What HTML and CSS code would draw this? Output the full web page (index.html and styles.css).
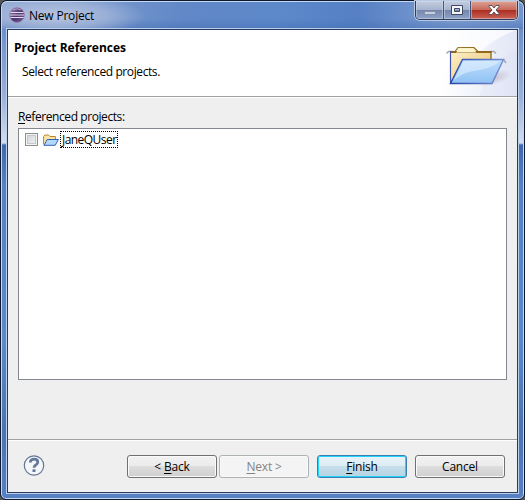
FILE: index.html
```html
<!DOCTYPE html>
<html lang="en">
<head>
<meta charset="utf-8">
<title>New Project</title>
<link rel="stylesheet" href="styles.css">
</head>
<body>
<main class="window">
  <header class="titlebar">
    <svg class="app-icon" width="16" height="16" viewBox="0 0 16 16">
      <defs><linearGradient id="orb" x2="1" y2="1"><stop stop-color="#9b86b5"/><stop offset=".5" stop-color="#4c3570"/><stop offset="1" stop-color="#765794"/></linearGradient></defs>
      <circle cx="8" cy="8" r="7.4" fill="url(#orb)" stroke="#a083ae" stroke-width=".7"/>
      <path d="M1.5 5.5h13M1 8h14M1.5 10.5h13" stroke="#e5dcec" stroke-width="1.1"/>
      <path d="M4 3Q8 .5 12 3" stroke="#b7a2c5" fill="none"/>
    </svg>
    <span class="title">New Project</span>
    <div class="controls">
      <div class="control minimize"><svg width="12" height="16" viewBox="0 0 12 16"><rect x=".5" y="9.5" width="11" height="3" fill="#c6cfdf" stroke="#8591a9"/></svg></div>
      <div class="control maximize"><svg width="12" height="12" viewBox="0 0 12 12"><path fill="#f4f4f4" stroke="#3d4966" fill-rule="evenodd" d="M.5 1.5h11v9H.5zM3.5 4.5h5v3h-5z"/></svg></div>
      <div class="control close"><svg width="12" height="12" viewBox="0 0 12 12"><path d="M1 1.5h3L6 4l2-2.5h3v1L8 6l3 3.5v1H8L6 8l-2 2.5H1v-1L4 6 1 2.5z" fill="#fff" stroke="#514652" stroke-width=".9"/></svg></div>
    </div>
  </header>
  <section class="client">
    <div class="banner">
      <div class="banner-text">
        <h1>Project References</h1>
        <p>Select referenced projects.</p>
      </div>
      <svg class="banner-art" width="75" height="66" viewBox="442 30 75 66">
        <defs>
          <linearGradient id="bg"><stop stop-color="#fff"/><stop offset="1" stop-color="#e2e6f6"/></linearGradient>
          <linearGradient id="cream" x2="1" y2="1"><stop stop-color="#fff3cf"/><stop offset="1" stop-color="#e8c16c"/></linearGradient>
          <linearGradient id="back" x2="1"><stop stop-color="#4354ad"/><stop offset=".2" stop-color="#a17a28"/><stop offset="1" stop-color="#83611a"/></linearGradient>
          <linearGradient id="blue" x2="0" y2="1"><stop stop-color="#c0dffd"/><stop offset="1" stop-color="#8fc1f4"/></linearGradient>
          <linearGradient id="edge" x2="1"><stop stop-color="#2646a8"/><stop offset="1" stop-color="#7790d0"/></linearGradient>
          <radialGradient id="shade"><stop stop-color="#b6a8bd" stop-opacity=".65"/><stop offset="1" stop-color="#b6a8bd" stop-opacity="0"/></radialGradient>
        </defs>
        <rect x="442" y="30" width="75" height="66" fill="url(#bg)"/>
        <path d="M442 30h75Q491 38 473 60L442 72z" fill="#fff" opacity=".7"/>
        <path d="M517 51Q493 57 479 96h38z" fill="#d9dff3" opacity=".25"/>
        <ellipse cx="493" cy="78" rx="19" ry="7" fill="url(#shade)" transform="rotate(-15 493 78)"/>
        <path d="M446.5 53.5l2-2h5M490 51.5h4l2 2M456.5 62l2-2h4M501 60h3l2 3" fill="none" stroke="#a7a7af" stroke-width="1.5"/>
        <path d="M450.5 83V51.5H455l3-4h16l4 4h13V83z" fill="url(#cream)" stroke="url(#back)" stroke-width="1.2"/>
        <path d="M451 52h40.5" stroke="#906816" stroke-width="1.8"/>
        <path d="M456 52.5l3-4h14l3.5 4z" fill="#fff5cf"/>
        <path d="M450.5 83.5l12-24h41l-11.5 24z" fill="url(#blue)" stroke="url(#edge)" stroke-width="1.4"/>
        <path d="M463.5 61h37q-10 8-24 9.5T454 80z" fill="#e0f0ff" opacity=".6"/>
      </svg>
    </div>
    <div class="content">
      <label class="list-label"><u>R</u>eferenced projects:</label>
      <div class="project-list">
        <div class="project">
          <span class="checkbox"></span>
          <svg class="folder" width="16" height="14" viewBox="0 0 16 14">
            <path d="M.6 11.4V3.5L2 2h3.5L7 3.5h5.4v3" fill="#fae5a5" stroke="#b8862c"/>
            <path d="M1 12.3L4.2 6.5h11.2l-3.2 5.8z" fill="#b3d9fa" stroke="#3462b4"/>
          </svg>
          <span class="project-name">JaneQUser</span>
        </div>
      </div>
    </div>
    <footer class="actions">
      <svg class="help" width="22" height="22" viewBox="0 0 22 22"><circle cx="11" cy="10.5" r="9.7" fill="#f4f6fa" stroke="#637590" stroke-width="1.2"/><path d="M7.2 7.5q.3-3.4 4-3.4 3.6 0 3.6 3.1 0 1.7-2 2.8-1.8 1-1.8 2.7" fill="none" stroke="#64789a" stroke-width="2.7"/><rect x="9.5" y="14.3" width="3" height="2.7" fill="#64789a"/></svg>
      <button class="button back"><span>&lt; <u>B</u>ack</span></button>
      <button class="button next" disabled><span><u>N</u>ext &gt;</span></button>
      <button class="button finish"><span><u>F</u>inish</span></button>
      <button class="button cancel"><span>Cancel</span></button>
    </footer>
  </section>
</main>
</body>
</html>
```
FILE: styles.css
```css
* { box-sizing: border-box; }
body { margin: 0; background: #555; font: 12px/16px "Open Sans", "Noto Sans", sans-serif; color: #000; }
.window {
  width: 525px; height: 500px; padding: 0 6px 6px; display: flex; flex-direction: column;
  border: 1px solid #10182e; border-radius: 7px 7px 6px 6px;
  box-shadow: inset 0 0 0 1px #c3daf2;
  background: linear-gradient(#7194cc 0, #6d90ca 28px, #9bb0d8 95px, #d5dced 142px, #3f68ae 144px, #5682c5 185px, #5b89ca 340px, #4a74b4 430px, #5781c3 500px);
}
.titlebar {
  height: 28px; margin: 0 -5px; padding-left: 7px; display: flex; align-items: flex-start; flex: none;
  border-radius: 6px 6px 0 0; border-top: 1px solid #c3daf2;
  background: radial-gradient(ellipse 85px 22px at 58px 14px, #c3cde3cc, #b1c0de99 55%, transparent), linear-gradient(transparent 60%, #3e69b077), linear-gradient(90deg, #91a9d2, #6188c7 35%, #5c88ca 55%, #5580c4 68%, #819fd1 87%, #7495cc);
}
.app-icon { margin-top: 5px; }
.title { margin: 6px 0 0 4px; letter-spacing: -.2px; }
.controls { display: flex; width: 103px; height: 19px; margin: -1px 5px 0 auto; border: 1px solid #303b59; border-top: 0; border-radius: 0 0 5px 5px; box-shadow: 0 0 0 1px #b7c9e3; overflow: hidden; }
.control { display: flex; align-items: center; justify-content: center; box-shadow: inset 0 0 0 1px #d8e2f077; background: linear-gradient(#c3cde0, #a8b4ce 48%, #7485aa 50%, #8fa3c9); }
.minimize { width: 28px; border-right: 1px solid #465473; }
.maximize { width: 27px; border-right: 1px solid #465473; }
.close { flex: 1; background: linear-gradient(#dda497, #c76a5c 48%, #ac2d20 50%, #ca6256); }
.client { flex: 1; min-height: 0; display: flex; flex-direction: column; border: 1px solid #29395f; outline: 1px solid #b9d0eb; background: #efefef; }
.banner { flex: none; display: flex; justify-content: space-between; height: 67px; background: #fff; border-bottom: 1px solid #a0a0a0; }
.banner-text { padding: 10px 0 0 6px; }
.banner h1 { font-size: 12px; line-height: 16px; margin: 0; letter-spacing: 0; }
.banner p { margin: 8px 0 0 8px; letter-spacing: -.4px; }
.content { flex: 1; padding: 11px 10px 0; border-top: 1px solid #fff; }
.list-label { display: block; letter-spacing: -.42px; }
u { text-underline-offset: 2px; text-decoration-thickness: 1px; }
.project-list { height: 252px; margin-top: 3px; border: 1px solid #828790; background: #fff; padding: 2px 6px; }
.project { display: flex; align-items: center; height: 17px; }
.checkbox { width: 13px; height: 13px; border: 1px solid #8e8f8f; background: linear-gradient(135deg, #ccd1d7, #f5f5f5); box-shadow: inset 0 0 0 1px #f4f4f4, inset 0 0 0 2px #c5c9ce; }
.folder { margin-left: 5px; }
.project-name { margin-left: 1px; padding-left: 1px; width: 58px; height: 17px; line-height: 16px; border: 1px dotted #000; letter-spacing: -.55px; white-space: nowrap; }
.actions { flex: none; display: flex; height: 53px; padding: 15px 12px 0 15px; border-top: 1px solid #a0a0a0; box-shadow: inset 0 1px #fff; }
.help { margin-right: auto; }
.button { font: inherit; color: #000; width: 90px; height: 23px; padding: 1px 0 0; border: 1px solid #707070; border-radius: 3px; box-shadow: inset 0 0 0 1px #fafafa; background: linear-gradient(#f2f2f2, #ebebeb 49%, #dddddd 50%, #cfcfcf); letter-spacing: -.2px; }
.next { margin-left: 2px; color: #838383; border-color: #adb2b5; background: #f4f4f4; }
.finish { margin-left: 8px; border-color: #3c7fb1; background: linear-gradient(#eaf3f8, #dcecf4 49%, #c6dfea 50%, #b5d3e1); box-shadow: inset 0 0 0 1px #22d4fb; }
.cancel { margin-left: 8px; }
```
